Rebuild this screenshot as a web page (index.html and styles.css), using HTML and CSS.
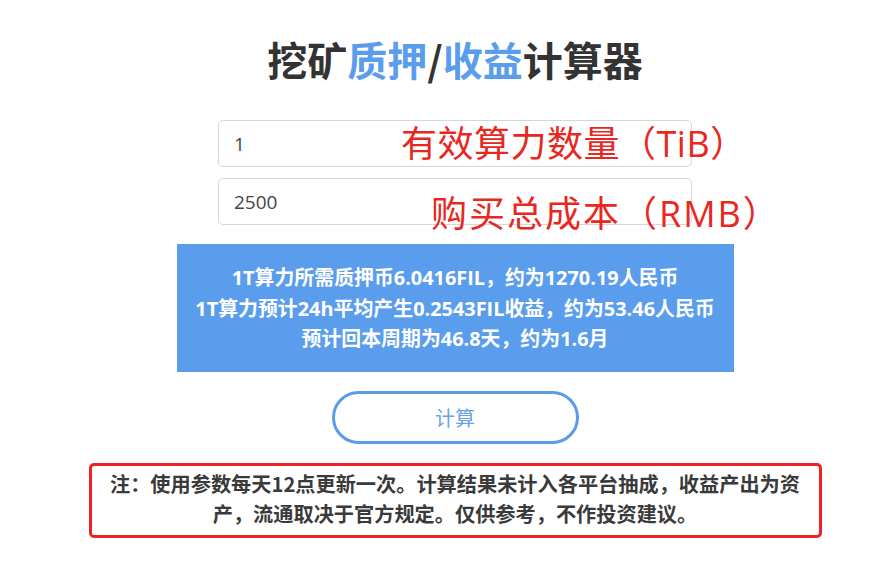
FILE: index.html
```html
<!DOCTYPE html>
<html lang="zh-CN">
<head>
<meta charset="utf-8">
<title>挖矿质押/收益计算器</title>
<link rel="stylesheet" href="styles.css">
</head>
<body>
<div class="page">
  <h1 class="title">挖矿<span class="hl">质押</span>/<span class="hl">收益</span>计算器</h1>
  <div class="fields">
    <input class="field" type="text" value="1">
    <input class="field" type="text" value="2500">
    <span class="note-label label-1">有效算力数量（TiB）</span>
    <span class="note-label label-2">购买总成本（RMB）</span>
  </div>
  <div class="result">
    <p class="result-line">1T算力所需质押币6.0416FIL，约为1270.19人民币</p>
    <p class="result-line">1T算力预计24h平均产生0.2543FIL收益，约为53.46人民币</p>
    <p class="result-line">预计回本周期为46.8天，约为1.6月</p>
  </div>
  <button class="calc" type="button">计算</button>
  <div class="notice">注：使用参数每天12点更新一次。计算结果未计入各平台抽成，收益产出为资产，流通取决于官方规定。仅供参考，不作投资建议。</div>
</div>
</body>
</html>
```

FILE: styles.css
```css
* { box-sizing: border-box; }
body {
  margin: 0;
  background: #ffffff;
  font-family: "Open Sans", "Noto Sans CJK SC", sans-serif;
  color: #333333;
}
.page {
  width: 870px;
  padding-left: 40px;
  display: flex;
  flex-direction: column;
  align-items: center;
}
.title {
  margin: 31px 0 0 0;
  height: 56px;
  line-height: 56px;
  font-size: 40px;
  font-weight: 700;
  color: #333333;
  font-family: "Noto Sans CJK SC", sans-serif;
}
.hl { color: #5b9ded; }
.fields {
  position: relative;
  width: 474px;
  margin-top: 33px;
  display: flex;
  flex-direction: column;
  gap: 11px;
}
.field {
  display: block;
  width: 100%;
  height: 47px;
  border: 1px solid #d6d6d6;
  border-radius: 5px;
  padding: 0 15px;
  font-family: "Open Sans", "Noto Sans CJK SC", sans-serif;
  font-size: 19px;
  color: #444444;
  background: #ffffff;
  outline: none;
}
.note-label {
  position: absolute;
  font-family: "Open Sans", "Noto Sans CJK SC", sans-serif;
  font-size: 36px;
  line-height: 40px;
  color: #e8271f;
  white-space: nowrap;
}
.label-1 { left: 183px; top: 4px; letter-spacing: 0.5px; }
.label-2 { left: 213px; top: 74px; letter-spacing: 2px; }
.result {
  width: 557px;
  height: 128px;
  margin-top: 19px;
  background: #5b9ded;
  padding-top: 19px;
  text-align: center;
  color: #ffffff;
}
.result-line {
  margin: 0;
  font-size: 19.9px;
  line-height: 30.5px;
  font-weight: 700;
  white-space: nowrap;
  font-family: "Open Sans", "Noto Sans CJK SC", sans-serif;
}
.calc {
  width: 247px;
  height: 53px;
  margin-top: 19px;
  border: 3px solid #5b9be8;
  border-radius: 27px;
  background: #ffffff;
  color: #6aa2e4;
  font-family: "Noto Sans CJK SC", sans-serif;
  font-size: 20px;
}
.notice {
  width: 733px;
  height: 75px;
  margin-top: 19px;
  border: 3px solid #ee2222;
  border-radius: 5px;
  padding: 3px 12px 0 12px;
  text-align: center;
  font-family: "Noto Sans CJK SC", sans-serif;
  font-size: 20.2px;
  line-height: 30px;
  font-weight: 700;
  color: #3a3a3a;
}
```
